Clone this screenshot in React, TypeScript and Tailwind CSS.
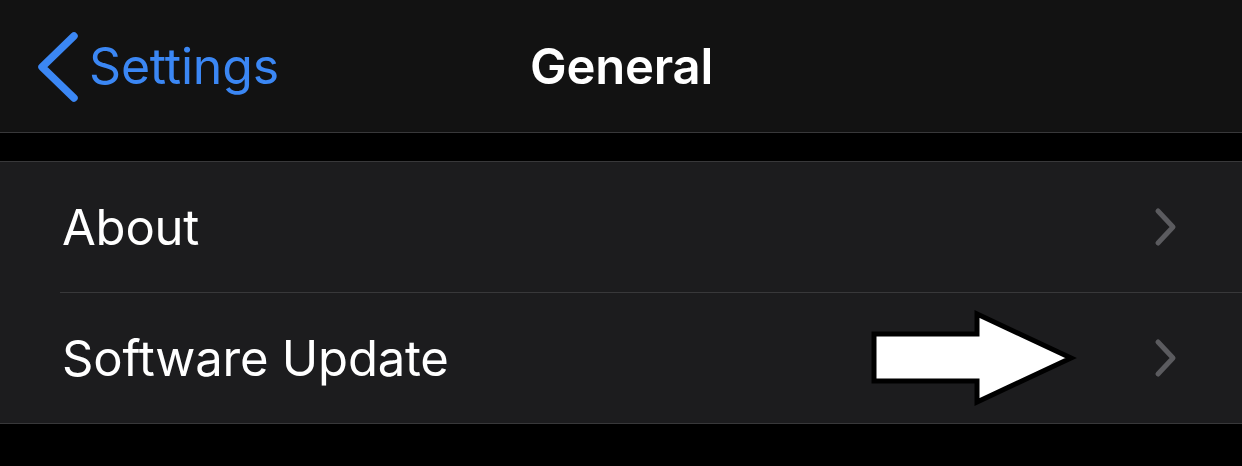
const rows = ['About', 'Software Update'];

function Chevron() {
  return (
    <svg width="24" height="40" viewBox="0 0 24 40" className="text-[#5b5b5f]">
      <path d="M4 4 L19 20 L4 36" fill="none" stroke="currentColor" strokeWidth="5" strokeLinecap="round" strokeLinejoin="round" />
    </svg>
  );
}

export default function App() {
  return (
    <div className="h-[466px] w-[1242px] overflow-hidden bg-black font-['Inter',sans-serif] antialiased">
      <header className="relative flex h-[133px] items-center border-b border-[#38383a] bg-[#121212]">
        <div className="absolute inset-0 flex items-center justify-center pl-[1px]">
          <h1 className="text-[49px] font-semibold leading-none tracking-[-0.2px] text-white">General</h1>
        </div>
        <div className="relative flex items-center pl-[36px] text-[#3b87f4]">
          <svg width="44" height="70" viewBox="0 0 44 70" className="mt-[2px]">
            <path d="M38 4 L6 35 L38 66" fill="none" stroke="currentColor" strokeWidth="7.5" strokeLinecap="round" strokeLinejoin="round" />
          </svg>
          <span className="ml-[9px] text-[50px] leading-none tracking-[-0.2px]">Settings</span>
        </div>
      </header>

      <div className="h-[28px]" />

      <div className="border-y border-[#38383a] bg-[#1c1c1e]">
        {rows.map((label, i) => (
          <div key={label}>
            {i > 0 && <div className="ml-[60px] h-px bg-[#38383a]" />}
            <div className="relative flex h-[130px] items-center justify-between pl-[62px] pr-[64px]">
              <span className="text-[49px] leading-none tracking-[-0.2px] text-white">{label}</span>
              <Chevron />
              {label === 'Software Update' && (
                <svg width="210" height="100" viewBox="0 0 210 100" className="absolute left-[868px] top-[17px]">
                  <path d="M6 24 H109 V4 L203 48 L109 92 V71 H6 Z" fill="white" stroke="black" strokeWidth="5" strokeLinejoin="miter" />
                </svg>
              )}
            </div>
          </div>
        ))}
      </div>
    </div>
  );
}
